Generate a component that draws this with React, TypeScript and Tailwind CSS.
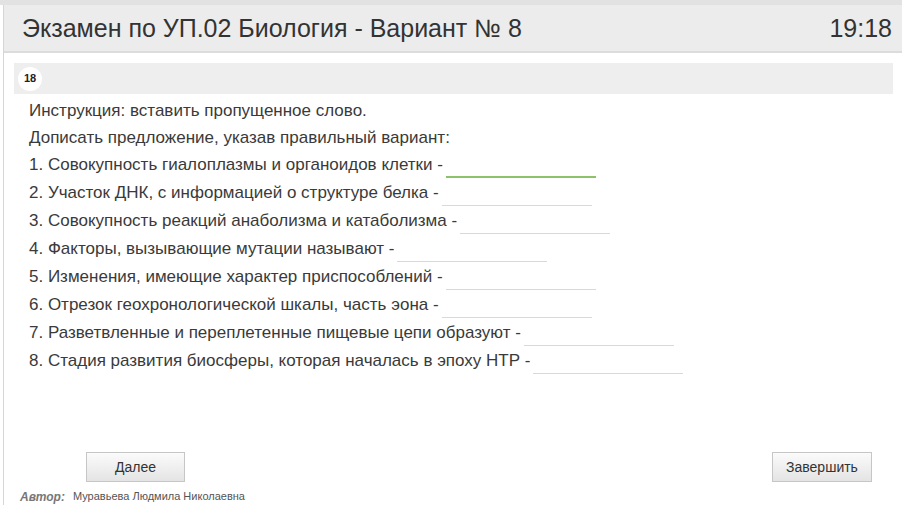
import { useState } from "react";

interface Item {
    text: string;
}

const items: Item[] = [
    { text: "1. Совокупность гиалоплазмы и органоидов клетки -" },
    { text: "2. Участок ДНК, с информацией о структуре белка -" },
    { text: "3. Совокупность реакций анаболизма и катаболизма -" },
    { text: "4. Факторы, вызывающие мутации называют -" },
    { text: "5. Изменения, имеющие характер приспособлений -" },
    { text: "6. Отрезок геохронологической шкалы, часть эона -" },
    { text: "7. Разветвленные и переплетенные пищевые цепи образуют -" },
    { text: "8. Стадия развития биосферы, которая началась в эпоху НТР -" },
];

const App = () => {
    const [answers, setAnswers] = useState<string[]>(items.map(() => ""));
    const [focused, setFocused] = useState(0);

    const updateAnswer = (idx: number, value: string) => {
        let temp = [...answers];
        temp[idx] = value;
        setAnswers(temp);
    };

    return (
        <div className="w-[902px] h-[505px] overflow-hidden bg-white font-['Liberation_Sans',Arial,sans-serif] text-[#3a3a3a]">
            <div className="h-[5px] bg-[#e2e2e2]" />
            <div className="ml-[3px] h-[500px] border-l border-[#d6d6d6] flex flex-col">
                {/* exam title and timer */}
                <div className="h-[48px] bg-[#ececec] border-b-2 border-[#dcdcdc] flex items-center justify-between pl-[18px] pr-[10px]">
                    <h1 className="text-[25px] leading-none text-[#333]">
                        Экзамен по УП.02 Биология - Вариант № 8
                    </h1>
                    <span className="text-[25px] leading-none text-[#333]">19:18</span>
                </div>

                <div className="pl-[10px] pr-[9px] pt-[10px]">
                    <div className="h-[31px] bg-[#eeeeee] flex items-center pl-[4px]">
                        <div className="w-[24px] h-[24px] rounded-full bg-white flex items-center justify-center text-[11px] font-bold text-[#222]">
                            18
                        </div>
                    </div>
                </div>

                <div className="pl-[25px] pt-[3px] text-[17px]">
                    <p className="h-[27px] leading-[27px]">Инструкция: вставить пропущенное слово.</p>
                    <p className="h-[27px] leading-[27px]">Дописать предложение, указав правильный вариант:</p>
                    {items.map((item, idx) => (
                        <div key={idx} className="h-[28px] flex items-center">
                            <span className="leading-[20px]">{item.text}</span>
                            <input
                                type="text"
                                value={answers[idx]}
                                onChange={(e) => updateAnswer(idx, e.target.value)}
                                onFocus={() => setFocused(idx)}
                                className={`ml-[3px] w-[150px] h-[26px] bg-transparent outline-none ${
                                    focused === idx
                                        ? "border-b-2 border-[#8cc26c]"
                                        : "border-b border-[#d9d9d9]"
                                }`}
                            />
                        </div>
                    ))}
                </div>

                <div className="flex-1" />

                <div className="flex justify-between pl-[82px] pr-[30px] mb-[3px]">
                    <button
                        type="button"
                        className="w-[99px] h-[30px] border border-[#c6c6c6] bg-gradient-to-b from-[#fbfbfb] to-[#e4e4e4] text-[14px] text-[#333]"
                    >
                        Далее
                    </button>
                    <button
                        type="button"
                        className="w-[100px] h-[30px] border border-[#c6c6c6] bg-gradient-to-b from-[#fbfbfb] to-[#e4e4e4] text-[14px] text-[#333]"
                    >
                        Завершить
                    </button>
                </div>

                <div className="h-[20px] flex items-center pl-[16px] pt-[3px] text-[11px]">
                    <span className="font-bold italic text-[#777] text-[12px] mr-[8px]">Автор:</span>
                    <span className="text-[#555]">Муравьева Людмила Николаевна</span>
                </div>
            </div>
        </div>
    );
};

export default App;
